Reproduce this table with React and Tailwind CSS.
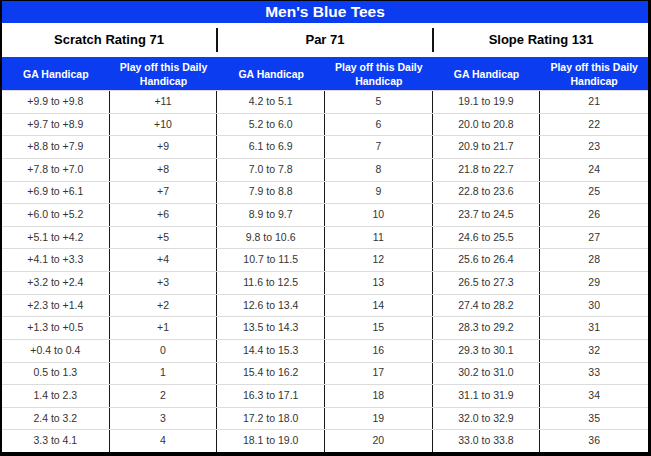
import React from "react";

const rows = [
  ["+9.9 to +9.8", "+11", "4.2 to 5.1", "5", "19.1 to 19.9", "21"],
  ["+9.7 to +8.9", "+10", "5.2 to 6.0", "6", "20.0 to 20.8", "22"],
  ["+8.8 to +7.9", "+9", "6.1 to 6.9", "7", "20.9 to 21.7", "23"],
  ["+7.8 to +7.0", "+8", "7.0 to 7.8", "8", "21.8 to 22.7", "24"],
  ["+6.9 to +6.1", "+7", "7.9 to 8.8", "9", "22.8 to 23.6", "25"],
  ["+6.0 to +5.2", "+6", "8.9 to 9.7", "10", "23.7 to 24.5", "26"],
  ["+5.1 to +4.2", "+5", "9.8 to 10.6", "11", "24.6 to 25.5", "27"],
  ["+4.1 to +3.3", "+4", "10.7 to 11.5", "12", "25.6 to 26.4", "28"],
  ["+3.2 to +2.4", "+3", "11.6 to 12.5", "13", "26.5 to 27.3", "29"],
  ["+2.3 to +1.4", "+2", "12.6 to 13.4", "14", "27.4 to 28.2", "30"],
  ["+1.3 to +0.5", "+1", "13.5 to 14.3", "15", "28.3 to 29.2", "31"],
  ["+0.4 to 0.4", "0", "14.4 to 15.3", "16", "29.3 to 30.1", "32"],
  ["0.5 to 1.3", "1", "15.4 to 16.2", "17", "30.2 to 31.0", "33"],
  ["1.4 to 2.3", "2", "16.3 to 17.1", "18", "31.1 to 31.9", "34"],
  ["2.4 to 3.2", "3", "17.2 to 18.0", "19", "32.0 to 32.9", "35"],
  ["3.3 to 4.1", "4", "18.1 to 19.0", "20", "33.0 to 33.8", "36"],
];

const headers = ["Scratch Rating 71", "Par 71", "Slope Rating 131"];

export default function App() {
  return (
    <div
      className="w-[651px] h-[456px] bg-black pt-px pl-[2px] pr-[3px] pb-[4px]"
      style={{ fontFamily: '"Liberation Sans", Arial, sans-serif' }}
    >
      <div className="h-full flex flex-col bg-white">
        {/* title */}
        <div className="h-[22px] bg-[#0b3cf0] flex items-center justify-center text-white font-bold text-[15.5px]">
          Men's Blue Tees
        </div>

        {/* rating row */}
        <div className="h-[34px] flex items-center">
          {headers.map((h, i) => (
            <React.Fragment key={h}>
              {i > 0 && <div className="w-[2px] h-[24px] bg-[#111]" />}
              <div className="flex-1 text-center font-bold text-[13px] text-black">
                {h}
              </div>
            </React.Fragment>
          ))}
        </div>

        {/* blue sub header */}
        <div className="h-[33px] bg-[#0b3cf0] grid grid-cols-6 text-white font-bold text-[10.5px] leading-[14px]">
          {[0, 1, 2].map((i) => (
            <React.Fragment key={i}>
              <div className="flex items-center justify-center text-center">
                GA Handicap
              </div>
              <div className="flex items-center justify-center text-center">
                Play off this Daily
                <br />
                Handicap
              </div>
            </React.Fragment>
          ))}
        </div>

        {/* data */}
        <div className="flex-1 flex flex-col">
          {rows.map((r, ri) => (
            <div
              key={ri}
              className="flex-1 grid grid-cols-6 border-t border-[#dcdcdc] text-[10.5px] text-[#333]"
            >
              {r.map((c, ci) => (
                <div
                  key={ci}
                  className={`flex items-center justify-center ${ci < 5 ? "border-r border-[#1a1a1a]" : ""}`}
                >
                  {c}
                </div>
              ))}
            </div>
          ))}
        </div>
      </div>
    </div>
  );
}
